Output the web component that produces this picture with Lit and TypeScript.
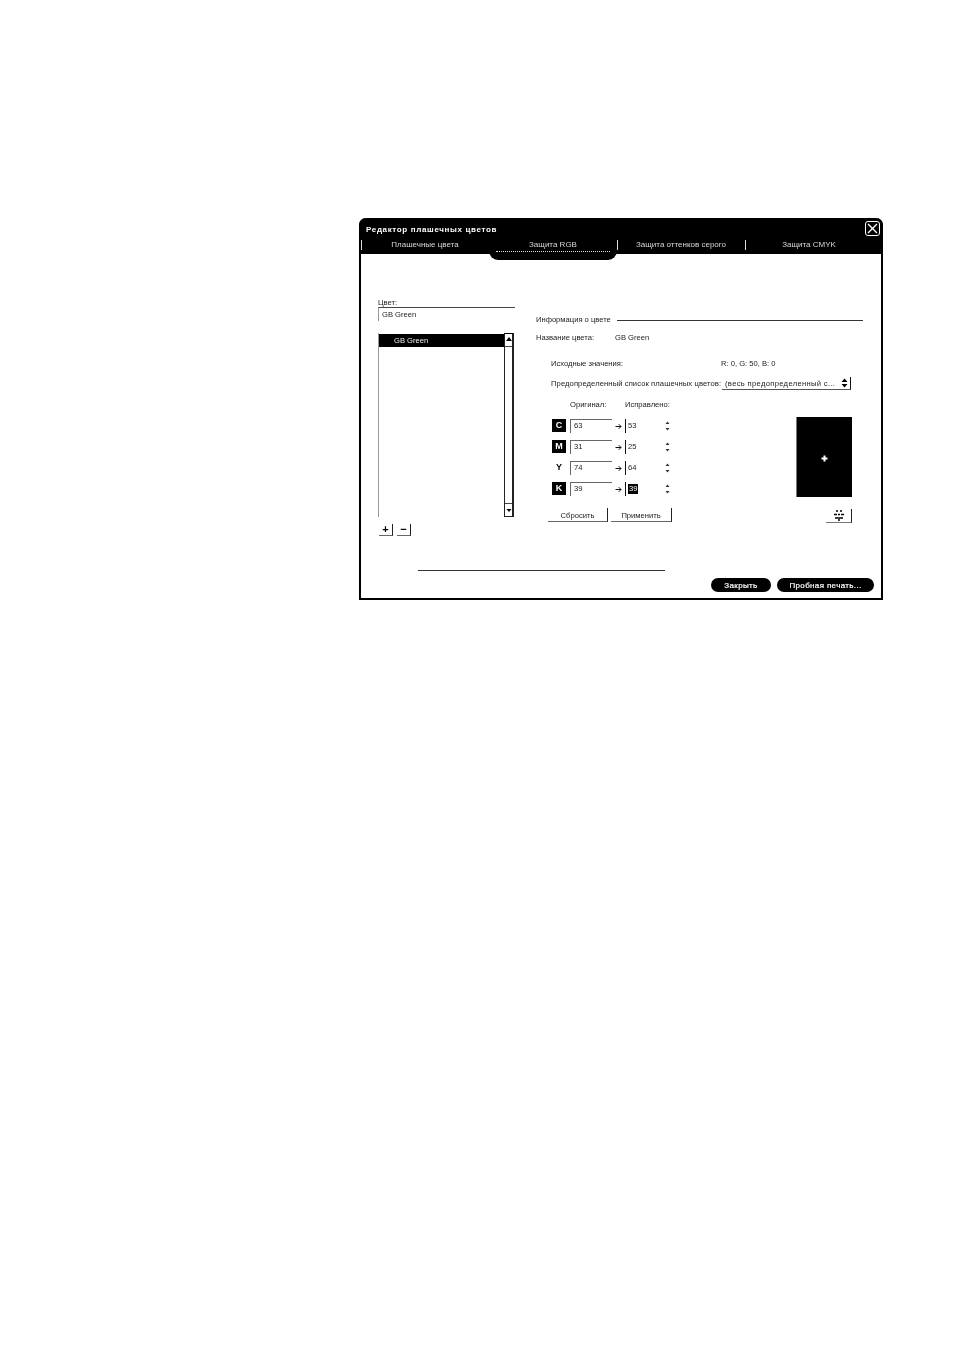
import { LitElement, html, css } from "lit";
import { customElement } from "lit/decorators.js";

const ROWS = [
  { k: "C", a: "63", b: "53", dark: true },
  { k: "M", a: "31", b: "25", dark: true },
  { k: "Y", a: "74", b: "64", dark: false },
  { k: "K", a: "39", b: "39", dark: true },
];

@customElement("app-root")
export class AppRoot extends LitElement {
  static styles = css`
    :host { display: block; width: 954px; height: 1350px; background: #fff; font-family: "Liberation Sans", Arial, sans-serif; font-size: 7.6px; color: #222; overflow: hidden; }
    .page { padding: 218px 0 0 359px; }
    .dialog { width: 524px; height: 382px; box-sizing: border-box; border: 2px solid #000; border-top: 0; border-radius: 7px 7px 0 0; display: flex; flex-direction: column; filter: grayscale(1) blur(0.42px); position: relative; }
    .head { background: #000; margin: 0 -2px; height: 36px; border-radius: 7px 7px 0 0; color: #fff; display: flex; flex-direction: column; position: relative; }
    .title { font-size: 8px; font-weight: 700; letter-spacing: 0.65px; padding: 7px 0 0 7px; height: 16px; line-height: 9px; box-sizing: border-box; }
    .close { position: absolute; left: 506px; top: 3px; width: 13px; height: 13px; border: 1px solid #fff; border-radius: 3px; }
    .close svg { display: block; }
    .tabs { display: flex; padding-left: 2px; margin-top: 6px; }
    .tab { font-size: 8px; width: 128px; height: 14px; line-height: 9px; text-align: center; position: relative; color: #d8d8d8; box-sizing: border-box; }
    .tab::before { content: ""; position: absolute; left: 0; top: 0; width: 1px; height: 10px; background: #ddd; }
    .tab.active::after { content: ""; position: absolute; left: 0; right: 0; top: 0; height: 20px; background: #000; border-radius: 0 0 9px 9px; z-index: 0; }
    .tab span { position: relative; z-index: 1; }
    .dots { position: absolute; z-index: 1; left: 7px; right: 7px; top: 11px; border-top: 1px dotted #ddd; }
    .body { flex: 1; display: flex; padding-left: 17px; }
    .left { width: 137px; margin-top: 43px; margin-right: 21px; }
    .label { height: 10px; line-height: 12px; }
    .cname { height: 14px; border-top: 1px solid #444; border-left: 1px solid #999; box-sizing: border-box; padding-left: 3px; line-height: 13px; }
    .list { height: 184px; margin-top: 12px; width: 136px; box-sizing: border-box; border-left: 1px solid #999; display: flex; position: relative; }
    .items { flex: 1; }
    .sel { background: #000; color: #eee; height: 13px; margin-top: 1px; line-height: 13px; padding-left: 15px; }
    .scroll { width: 10px; border: 1px solid #222; border-top-color: #000; box-sizing: border-box; border-right-width: 2px; display: flex; flex-direction: column; justify-content: space-between; }
    .scroll svg { display: block; }
    .scroll .cap { height: 12px; background: #fff; border-bottom: 1px solid #444; }
    .scroll .cap.end { border-bottom: 0; border-top: 1px solid #444; }
    .addrem { display: flex; gap: 4px; margin-top: 7px; padding-left: 1px; }
    .mini { width: 14px; height: 12px; border-bottom: 1px solid #666; border-right: 1px solid #222; box-sizing: border-box; font-weight: 700; font-size: 11px; line-height: 10px; text-align: center; color: #000; }
    .right { width: 327px; margin-top: 61px; }
    .legend { display: flex; align-items: center; gap: 6px; height: 10px; line-height: 12px; }
    .legend i { flex: 1; border-top: 1px solid #333; }
    .namerow { display: flex; margin-top: 7px; height: 10px; line-height: 12px; }
    .namerow span:first-child { width: 79px; }
    .inner { padding: 0 11px 0 15px; }
    .src { display: flex; margin-top: 16px; height: 10px; line-height: 12px; }
    .src span:first-child { width: 170px; }
    .preset { display: flex; align-items: center; margin-top: 9px; height: 13px; }
    .preset .t { width: 171px; white-space: nowrap; letter-spacing: 0.1px; }
    .select { width: 129px; height: 13px; box-sizing: border-box; border-right: 1px solid #111; border-bottom: 1px solid #555; display: flex; align-items: center; justify-content: space-between; padding: 0 2px 0 3px; letter-spacing: 0.33px; white-space: nowrap; }
    .cm { display: flex; justify-content: space-between; }
    .heads { display: flex; margin-top: 9px; height: 10px; line-height: 12px; padding-left: 19px; }
    .heads span:first-child { width: 55px; }
    .rows { display: flex; flex-direction: column; gap: 7px; margin-top: 10px; }
    .row { display: flex; align-items: center; height: 14px; }
    .badge { align-self: flex-start; width: 14px; height: 13px; margin-left: 1px; margin-right: 4px; font-weight: 700; font-size: 9px; line-height: 13px; text-align: center; color: #000; }
    .badge.dark { background: #000; color: #fff; }
    .in { width: 42px; height: 14px; box-sizing: border-box; border-top: 1px solid #666; border-left: 1px solid #666; padding-left: 3px; line-height: 12px; }
    .arrow { width: 13px; display: flex; justify-content: center; }
    .out { width: 40px; height: 14px; box-sizing: border-box; border-left: 1px solid #111; padding-left: 2px; line-height: 13px; }
    .hl { background: #000; color: #fff; display: inline-block; line-height: 10px; padding: 0 1px; }
    .spin { width: 5px; display: block; }
    .acts { display: flex; gap: 3px; margin-top: 12px; margin-left: -3px; }
    .btn { height: 14px; box-sizing: border-box; border-right: 1px solid #222; border-bottom: 1px solid #666; text-align: center; line-height: 16px; }
    .b1 { width: 60px; }
    .b2 { width: 61px; }
    .swcol { display: flex; flex-direction: column; align-items: flex-end; padding-top: 27px; }
    .swatch { width: 56px; height: 80px; background: #000; display: flex; align-items: center; justify-content: center; padding-top: 2px; border-left: 1px solid #777; box-sizing: border-box; }
    .swbtn { width: 26px; height: 14px; margin-top: 12px; box-sizing: border-box; border-right: 1px solid #222; border-bottom: 1px solid #777; display: flex; justify-content: center; align-items: center; }
    .foot { padding-bottom: 6px; }
    .rule { width: 247px; margin-left: 57px; border-top: 1px solid #333; }
    .btns { display: flex; justify-content: flex-end; gap: 6px; margin-top: 7px; padding-right: 7px; }
    .pill { font-size: 8px; height: 14px; border-radius: 7px; background: #000; color: #fff; line-height: 15px; text-align: center; letter-spacing: 0.35px; -webkit-text-stroke: 0.2px #fff; }
    .p1 { width: 60px; }
    .p2 { width: 97px; }
  `;

  render() {
    return html`<div class="page"><div class="dialog">
      <div class="head">
        <div class="title">Редактор плашечных цветов</div>
        <div class="close"><svg width="13" height="13" viewBox="0 0 13 13"><path d="M2 2 L11 11 M11 2 L2 11" stroke="#fff" stroke-width="1.3"/></svg></div>
        <div class="tabs">
          <div class="tab"><span>Плашечные цвета</span></div>
          <div class="tab active"><span>Защита RGB</span><div class="dots"></div></div>
          <div class="tab"><span>Защита оттенков серого</span></div>
          <div class="tab"><span>Защита CMYK</span></div>
        </div>
      </div>
      <div class="body">
        <div class="left">
          <div class="label">Цвет:</div>
          <div class="cname">GB Green</div>
          <div class="list">
            <div class="items"><div class="sel">GB Green</div></div>
            <div class="scroll">
              <div class="cap"><svg width="8" height="11" viewBox="0 0 8 11"><path d="M4 3 L1 7 H7 Z" fill="#000"/></svg></div>
              <div class="cap end"><svg width="8" height="11" viewBox="0 0 8 11"><path d="M4 8 L1.5 5 H6.5 Z" fill="#000"/></svg></div>
            </div>
          </div>
          <div class="addrem"><div class="mini">+</div><div class="mini">−</div></div>
        </div>
        <div class="right">
          <div class="legend"><span>Информация о цвете</span><i></i></div>
          <div class="namerow"><span>Название цвета:</span><span>GB Green</span></div>
          <div class="inner">
            <div class="src"><span>Исходные значения:</span><span>R: 0, G: 50, B: 0</span></div>
            <div class="preset"><span class="t">Предопределенный список плашечных цветов:</span>
              <div class="select"><span>(весь предопределенный с...</span>
                <svg width="7" height="10" viewBox="0 0 7 10"><path d="M3.5 0.5 L0.5 4 H6.5 Z M3.5 9.5 L0.5 6 H6.5 Z" fill="#000"/></svg>
              </div>
            </div>
            <div class="cm">
              <div>
                <div class="heads"><span>Оригинал:</span><span>Исправлено:</span></div>
                <div class="rows">
                  ${ROWS.map((r, i) => html`<div class="row">
                    <div class="badge ${r.dark ? "dark" : ""}">${r.k}</div>
                    <div class="in">${r.a}</div>
                    <div class="arrow"><svg width="7" height="7" viewBox="0 0 7 7"><path d="M0.5 3.5 H6 M3.8 1.2 L6 3.5 L3.8 5.8" fill="none" stroke="#111" stroke-width="1"/></svg></div>
                    <div class="out">${i === 3 ? html`<span class="hl">${r.b}</span>` : r.b}</div>
                    <svg class="spin" width="5" height="10" viewBox="0 0 5 10"><path d="M2.5 0.5 L0.5 3 H4.5 Z M2.5 9.5 L0.5 7 H4.5 Z" fill="#333"/></svg>
                  </div>`)}
                </div>
                <div class="acts">
                  <div class="btn b1">Сбросить</div>
                  <div class="btn b2">Применить</div>
                </div>
              </div>
              <div class="swcol">
                <div class="swatch"><svg width="7" height="7" viewBox="0 0 7 7"><path d="M3.5 0.5 V6.5 M0.5 3.5 H6.5" stroke="#fff" stroke-width="2"/></svg></div>
                <div class="swbtn"><svg width="14" height="11" viewBox="0 0 14 11"><path d="M4 1 h2 M8 1 h2 M2 4.5 h3 M6 4.5 h2 M9 4.5 h3 M3 8 h8 M6 10 h2" stroke="#000" stroke-width="1.4"/></svg></div>
              </div>
            </div>
          </div>
        </div>
      </div>
      <div class="foot">
        <div class="rule"></div>
        <div class="btns"><div class="pill p1">Закрыть</div><div class="pill p2">Пробная печать...</div></div>
      </div>
    </div></div>`;
  }
}
